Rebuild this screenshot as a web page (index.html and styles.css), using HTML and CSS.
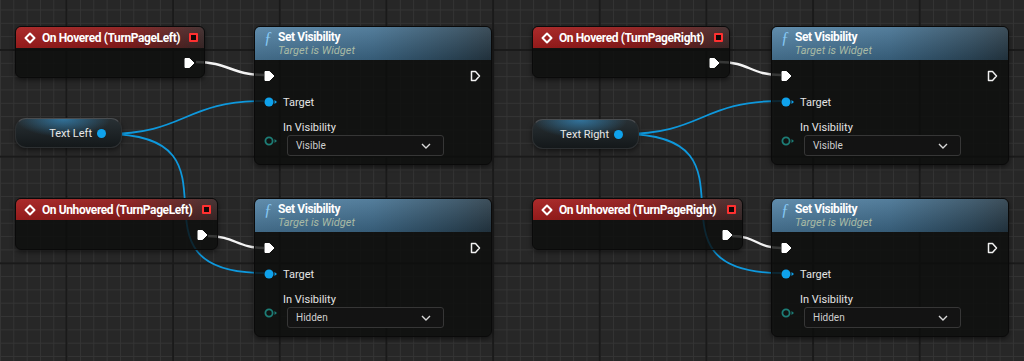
FILE: index.html
```html
<!DOCTYPE html>
<html lang="en">
<head>
<meta charset="UTF-8">
<meta name="viewport" content="width=device-width, initial-scale=1.0">
<title>Blueprint - TurnPage hover</title>
<link rel="stylesheet" href="styles.css">
</head>

<body>
    <div class="graph">
        <!-- wires sit under the nodes, node bodies are translucent -->
        <svg class="wires" width="1024" height="361" viewBox="0 0 1024 361">
            <path class="wire-data" d="M106 134 C186 134, 184 101, 264 101" />
            <path class="wire-data" d="M106 134 C256 134, 114 273, 264 273" />
            <path class="wire-data" d="M623 134 C703 134, 701 101, 781 101" />
            <path class="wire-data" d="M623 134 C773 134, 631 273, 781 273" />
            <path class="wire-exec" d="M196 62 C228 62, 232 75, 264 75" />
            <path class="wire-exec" d="M208 236 C234 236, 238 248, 264 248" />
            <path class="wire-exec" d="M719 62 C750 62, 750 75, 781 75" />
            <path class="wire-exec" d="M732 236 C756 236, 757 248, 781 248" />
        </svg>

        <!-- left column -->
        <div class="node event hover-left">
            <div class="node-head">
                <svg class="ev-icon" width="12" height="12" viewBox="0 0 12 12"><path d="M6 1.5 L10.5 6 L6 10.5 L1.5 6 Z" /></svg>
                <span class="title">On Hovered (TurnPageLeft)</span>
                <span class="delegate"></span>
            </div>
            <div class="node-body">
                <svg class="exec" width="11" height="12" viewBox="0 0 11 12"><path class="exec-on" d="M1 1.5 H5.5 L10 6 L5.5 10.5 H1 Z" /></svg>
            </div>
        </div>

        <div class="node func vis-left-top">
            <div class="node-head">
                <span class="fn">ƒ</span>
                <div>
                    <div class="title">Set Visibility</div>
                    <div class="subtitle">Target is Widget</div>
                </div>
            </div>
            <div class="node-body">
                <div class="row exec-row">
                    <svg class="exec" width="11" height="12" viewBox="0 0 11 12"><path class="exec-on" d="M1 1.5 H5.5 L10 6 L5.5 10.5 H1 Z" /></svg>
                    <svg class="exec" width="11" height="12" viewBox="0 0 11 12"><path class="exec-off" d="M1.5 1.5 H5.5 L9.5 6 L5.5 10.5 H1.5 Z" /></svg>
                </div>
                <div class="row pin-row">
                    <svg class="pin" width="14" height="10" viewBox="0 0 14 10"><circle class="obj" cx="5" cy="5" r="4.5" /><path class="obj" d="M10.5 3 L13 5 L10.5 7 Z" /></svg>
                    <span class="pin-label">Target</span>
                </div>
                <div class="field-label">In Visibility</div>
                <div class="row enum-row">
                    <svg class="pin" width="14" height="10" viewBox="0 0 14 10"><circle class="enum" cx="5" cy="5" r="3.6" /><path class="enum-arrow" d="M10.5 3 L13 5 L10.5 7 Z" /></svg>
                    <div class="combo">
                        <span>Visible</span>
                        <svg width="10" height="6" viewBox="0 0 10 6"><path d="M1 1 L5 5 L9 1" /></svg>
                    </div>
                </div>
            </div>
        </div>

        <div class="node var text-left">
            <span class="var-name">Text Left</span>
            <span class="var-pin"></span>
        </div>

        <div class="node event unhover-left">
            <div class="node-head">
                <svg class="ev-icon" width="12" height="12" viewBox="0 0 12 12"><path d="M6 1.5 L10.5 6 L6 10.5 L1.5 6 Z" /></svg>
                <span class="title">On Unhovered (TurnPageLeft)</span>
                <span class="delegate"></span>
            </div>
            <div class="node-body">
                <svg class="exec" width="11" height="12" viewBox="0 0 11 12"><path class="exec-on" d="M1 1.5 H5.5 L10 6 L5.5 10.5 H1 Z" /></svg>
            </div>
        </div>

        <div class="node func vis-left-bottom">
            <div class="node-head">
                <span class="fn">ƒ</span>
                <div>
                    <div class="title">Set Visibility</div>
                    <div class="subtitle">Target is Widget</div>
                </div>
            </div>
            <div class="node-body">
                <div class="row exec-row">
                    <svg class="exec" width="11" height="12" viewBox="0 0 11 12"><path class="exec-on" d="M1 1.5 H5.5 L10 6 L5.5 10.5 H1 Z" /></svg>
                    <svg class="exec" width="11" height="12" viewBox="0 0 11 12"><path class="exec-off" d="M1.5 1.5 H5.5 L9.5 6 L5.5 10.5 H1.5 Z" /></svg>
                </div>
                <div class="row pin-row">
                    <svg class="pin" width="14" height="10" viewBox="0 0 14 10"><circle class="obj" cx="5" cy="5" r="4.5" /><path class="obj" d="M10.5 3 L13 5 L10.5 7 Z" /></svg>
                    <span class="pin-label">Target</span>
                </div>
                <div class="field-label">In Visibility</div>
                <div class="row enum-row">
                    <svg class="pin" width="14" height="10" viewBox="0 0 14 10"><circle class="enum" cx="5" cy="5" r="3.6" /><path class="enum-arrow" d="M10.5 3 L13 5 L10.5 7 Z" /></svg>
                    <div class="combo">
                        <span>Hidden</span>
                        <svg width="10" height="6" viewBox="0 0 10 6"><path d="M1 1 L5 5 L9 1" /></svg>
                    </div>
                </div>
            </div>
        </div>

        <!-- right column -->
        <div class="node event hover-right">
            <div class="node-head">
                <svg class="ev-icon" width="12" height="12" viewBox="0 0 12 12"><path d="M6 1.5 L10.5 6 L6 10.5 L1.5 6 Z" /></svg>
                <span class="title">On Hovered (TurnPageRight)</span>
                <span class="delegate"></span>
            </div>
            <div class="node-body">
                <svg class="exec" width="11" height="12" viewBox="0 0 11 12"><path class="exec-on" d="M1 1.5 H5.5 L10 6 L5.5 10.5 H1 Z" /></svg>
            </div>
        </div>

        <div class="node func vis-right-top">
            <div class="node-head">
                <span class="fn">ƒ</span>
                <div>
                    <div class="title">Set Visibility</div>
                    <div class="subtitle">Target is Widget</div>
                </div>
            </div>
            <div class="node-body">
                <div class="row exec-row">
                    <svg class="exec" width="11" height="12" viewBox="0 0 11 12"><path class="exec-on" d="M1 1.5 H5.5 L10 6 L5.5 10.5 H1 Z" /></svg>
                    <svg class="exec" width="11" height="12" viewBox="0 0 11 12"><path class="exec-off" d="M1.5 1.5 H5.5 L9.5 6 L5.5 10.5 H1.5 Z" /></svg>
                </div>
                <div class="row pin-row">
                    <svg class="pin" width="14" height="10" viewBox="0 0 14 10"><circle class="obj" cx="5" cy="5" r="4.5" /><path class="obj" d="M10.5 3 L13 5 L10.5 7 Z" /></svg>
                    <span class="pin-label">Target</span>
                </div>
                <div class="field-label">In Visibility</div>
                <div class="row enum-row">
                    <svg class="pin" width="14" height="10" viewBox="0 0 14 10"><circle class="enum" cx="5" cy="5" r="3.6" /><path class="enum-arrow" d="M10.5 3 L13 5 L10.5 7 Z" /></svg>
                    <div class="combo">
                        <span>Visible</span>
                        <svg width="10" height="6" viewBox="0 0 10 6"><path d="M1 1 L5 5 L9 1" /></svg>
                    </div>
                </div>
            </div>
        </div>

        <div class="node var text-right">
            <span class="var-name">Text Right</span>
            <span class="var-pin"></span>
        </div>

        <div class="node event unhover-right">
            <div class="node-head">
                <svg class="ev-icon" width="12" height="12" viewBox="0 0 12 12"><path d="M6 1.5 L10.5 6 L6 10.5 L1.5 6 Z" /></svg>
                <span class="title">On Unhovered (TurnPageRight)</span>
                <span class="delegate"></span>
            </div>
            <div class="node-body">
                <svg class="exec" width="11" height="12" viewBox="0 0 11 12"><path class="exec-on" d="M1 1.5 H5.5 L10 6 L5.5 10.5 H1 Z" /></svg>
            </div>
        </div>

        <div class="node func vis-right-bottom">
            <div class="node-head">
                <span class="fn">ƒ</span>
                <div>
                    <div class="title">Set Visibility</div>
                    <div class="subtitle">Target is Widget</div>
                </div>
            </div>
            <div class="node-body">
                <div class="row exec-row">
                    <svg class="exec" width="11" height="12" viewBox="0 0 11 12"><path class="exec-on" d="M1 1.5 H5.5 L10 6 L5.5 10.5 H1 Z" /></svg>
                    <svg class="exec" width="11" height="12" viewBox="0 0 11 12"><path class="exec-off" d="M1.5 1.5 H5.5 L9.5 6 L5.5 10.5 H1.5 Z" /></svg>
                </div>
                <div class="row pin-row">
                    <svg class="pin" width="14" height="10" viewBox="0 0 14 10"><circle class="obj" cx="5" cy="5" r="4.5" /><path class="obj" d="M10.5 3 L13 5 L10.5 7 Z" /></svg>
                    <span class="pin-label">Target</span>
                </div>
                <div class="field-label">In Visibility</div>
                <div class="row enum-row">
                    <svg class="pin" width="14" height="10" viewBox="0 0 14 10"><circle class="enum" cx="5" cy="5" r="3.6" /><path class="enum-arrow" d="M10.5 3 L13 5 L10.5 7 Z" /></svg>
                    <div class="combo">
                        <span>Hidden</span>
                        <svg width="10" height="6" viewBox="0 0 10 6"><path d="M1 1 L5 5 L9 1" /></svg>
                    </div>
                </div>
            </div>
        </div>
    </div>
</body>

</html>
```

FILE: styles.css
```css
* {
    box-sizing: border-box;
}

body {
    margin: 0;
    background-color: #262626;
    font-family: Roboto, "Liberation Sans", sans-serif;
}

/* graph canvas with minor / major grid */
.graph {
    position: relative;
    width: 1024px;
    height: 361px;
    overflow: hidden;
    background-color: #272727;
    background-image:
        linear-gradient(to right, #1a1a1a 2px, transparent 2px),
        linear-gradient(to bottom, #1a1a1a 2px, transparent 2px),
        linear-gradient(to right, #343434 1px, transparent 1px),
        linear-gradient(to bottom, #343434 1px, transparent 1px);
    background-size: 106.667px 106.667px, 106.667px 106.667px, 13.333px 13.333px, 13.333px 13.333px;
    background-position: 65.5px 0, 0 49px, 0 0, 0 9.5px;
}

.wires {
    position: absolute;
    left: 0;
    top: 0;
}

.wire-exec {
    fill: none;
    stroke: #f4f4f4;
    stroke-width: 2.4;
}

.wire-data {
    fill: none;
    stroke: #0e98dc;
    stroke-width: 1.8;
}

/* nodes */
.node {
    position: absolute;
    border-radius: 6px;
    background: rgba(12, 13, 12, 0.82);
    border: 1px solid #0a0a0a;
    box-shadow: 0 2px 5px rgba(0, 0, 0, 0.5);
}

.node-head {
    border-radius: 5px 5px 0 0;
}

.title {
    color: #fff;
    font-weight: 700;
    font-size: 12px;
    letter-spacing: -0.4px;
    white-space: nowrap;
}

/* event nodes */
.event {
    height: 52px;
}

.event .node-head {
    height: 21px;
    display: flex;
    align-items: center;
    gap: 6px;
    padding: 0 6px 0 8px;
    background:
        linear-gradient(to bottom, rgba(255, 255, 255, 0.06), rgba(0, 0, 0, 0.12)),
        linear-gradient(to right, #a71e1e 0%, #8e1b1b 55%, #5a2424 85%, #3c2a2a 100%);
}

.event .title {
    flex: 1;
}

.ev-icon path {
    fill: none;
    stroke: #fff;
    stroke-width: 2;
    stroke-linejoin: round;
}

.delegate {
    width: 9px;
    height: 9px;
    border: 2px solid #ff3030;
    background: #140808;
    border-radius: 1px;
}

.event .node-body {
    height: 29px;
    display: flex;
    align-items: center;
    justify-content: flex-end;
    padding-right: 9px;
}

.exec-on {
    fill: #fff;
    stroke: #fff;
    stroke-width: 1;
    stroke-linejoin: round;
}

.exec-off {
    fill: none;
    stroke: #f0f0f0;
    stroke-width: 1.5;
    stroke-linejoin: round;
}

/* function nodes */
.func {
    width: 238px;
    height: 139px;
}

.func .node-head {
    height: 33px;
    display: flex;
    align-items: flex-start;
    gap: 6px;
    padding: 3px 0 0 9px;
    background:
        linear-gradient(to bottom, rgba(255, 255, 255, 0.1), rgba(0, 0, 0, 0.18)),
        linear-gradient(to right, #4f80a3 0%, #416f90 50%, #2f4c60 85%, #273a47 100%);
}

.fn {
    font-family: "Liberation Serif", serif;
    font-style: italic;
    font-size: 16px;
    color: #86c8f4;
    line-height: 15px;
    width: 8px;
}

.func .title {
    line-height: 14px;
}

.subtitle {
    color: #a9bba5;
    font-style: italic;
    font-size: 11px;
    line-height: 14px;
    white-space: nowrap;
}

.func .node-body {
    display: flex;
    flex-direction: column;
    padding: 6px 0 0;
}

.row {
    display: flex;
    align-items: center;
    height: 20px;
}

.exec-row {
    justify-content: space-between;
    padding: 0 10px 0 9px;
}

.pin-row {
    margin-top: 6px;
    padding-left: 9px;
}

.pin-label {
    margin-left: 5px;
    color: #e4e4e4;
    font-size: 11px;
}

.obj {
    fill: #0fa2ec;
}

.enum {
    fill: none;
    stroke: #1d7d76;
    stroke-width: 1.8;
}

.enum-arrow {
    fill: #1d7d76;
}

.field-label {
    margin: 9px 0 0 28px;
    height: 14px;
    line-height: 14px;
    color: #e4e4e4;
    font-size: 11px;
}

.enum-row {
    height: 21px;
    align-items: flex-start;
    padding-left: 9px;
}

.enum-row .pin {
    margin-top: 1px;
}

.combo {
    margin-left: 9px;
    width: 157px;
    height: 21px;
    display: flex;
    align-items: center;
    justify-content: space-between;
    padding: 0 12px 0 8px;
    border: 1px solid #363636;
    border-radius: 3px;
    background: #131313;
    color: #cfcfcf;
    font-size: 10px;
}

.combo path {
    fill: none;
    stroke: #d8d8d8;
    stroke-width: 1.4;
}

/* variable getters */
.var {
    height: 30px;
    width: 107px;
    border-radius: 11px;
    display: flex;
    align-items: center;
    justify-content: flex-end;
    gap: 5px;
    padding-right: 15px;
    border: 1px solid #2c2f31;
    border-top-color: #4a4d50;
    background:
        radial-gradient(ellipse 60% 85% at 45% 0%, rgba(55, 150, 210, 0.65), transparent 75%),
        linear-gradient(to bottom, #283034, #14181a);
}

.var-name {
    color: #e8e8e8;
    font-size: 11px;
    white-space: nowrap;
}

.var-pin {
    width: 9px;
    height: 9px;
    border-radius: 50%;
    background: #0fa2ec;
}

/* node placement on the canvas */
.hover-left { left: 15px; top: 26px; width: 190px; }
.vis-left-top { left: 254px; top: 26px; }
.text-left { left: 15px; top: 118px; }
.unhover-left { left: 15px; top: 198px; width: 203px; }
.vis-left-bottom { left: 254px; top: 198px; }

.hover-right { left: 532px; top: 26px; width: 198px; }
.vis-right-top { left: 771px; top: 26px; }
.text-right { left: 532px; top: 119px; }
.unhover-right { left: 532px; top: 198px; width: 211px; }
.vis-right-bottom { left: 771px; top: 198px; }
```
